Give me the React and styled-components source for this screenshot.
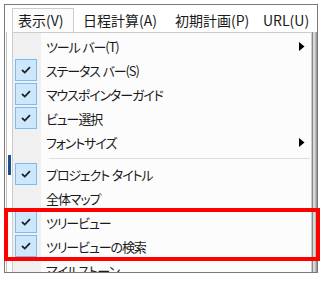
import React from "react";
import styled, { createGlobalStyle } from "styled-components";

const GlobalStyle = createGlobalStyle`
  html, body { margin: 0; padding: 0; background: #ffffff; }
  body { font-family: "Noto Sans CJK JP", "Noto Sans", sans-serif; }
  * { box-sizing: border-box; }
`;

const Page = styled.div`
  position: relative;
  width: 326px;
  height: 281px;
  padding: 4px 0 0 4px;
  overflow: hidden;
`;

const Frame = styled.div`
  width: 314px;
  height: 269px;
  border: 1px solid #7a7a7a;
  display: flex;
  flex-direction: column;
  overflow: hidden;
  background: #ffffff;
`;

const MenuBar = styled.div`
  height: 27px;
  display: flex;
  align-items: flex-end;
  padding-left: 7px;
`;

const TopItem = styled.div`
  width: ${(p) => p.$w}px;
  height: 24px;
  flex: none;
  display: flex;
  align-items: center;
  padding: 0 0 2px ${(p) => p.$indent}px;
  font-size: 14px;
  line-height: 1;
  color: #1a1a1a;
  white-space: nowrap;
  border: 1px solid ${(p) => (p.$open ? "#cccccc" : "transparent")};
  border-bottom: none;
  background: ${(p) => (p.$open ? "#fcfcfc" : "transparent")};
`;

const Body = styled.div`
  flex: 1;
  display: flex;
  min-height: 0;
`;

const LeftStrip = styled.div`
  width: 6px;
  margin-left: 1px;
  flex: none;
  border-left: 1px solid #c4c4c4;
  background: linear-gradient(
    to bottom,
    #ffffff 0 123px,
    #1c4f91 123px 143px,
    #ffffff 143px
  );
  background-size: 3px 100%;
  background-repeat: no-repeat;
  background-position: 1px 0;
`;

const Dropdown = styled.div`
  width: 300px;
  flex: none;
  border: 1px solid #cccccc;
  border-bottom: none;
  padding: 1px 0 0 0;
  background: linear-gradient(to right, #f0f0f0 0 28px, #fcfcfc 28px);
  display: flex;
  flex-direction: column;
`;

const RightStrip = styled.div`
  flex: 1;
  background: linear-gradient(
    to right,
    #8a8a8a 0 1px,
    #d8d8d8 1px 3px,
    #bdbdbd 3px 4px,
    #9a9a9a 4px
  );
`;

const Item = styled.div`
  height: 24px;
  flex: none;
  display: flex;
  align-items: center;
  padding: 0 6px 0 2px;
`;

const CheckCell = styled.div`
  width: 22px;
  height: 22px;
  flex: none;
  display: flex;
  align-items: center;
  justify-content: center;
  border: 1px solid ${(p) => (p.$checked ? "#7fbaef" : "transparent")};
  background: ${(p) => (p.$checked ? "#cde8fc" : "transparent")};
`;

const Label = styled.span`
  flex: 1;
  margin-left: 9px;
  font-size: 13px;
  line-height: 1;
  letter-spacing: -1.1px;
  word-spacing: 1px;
  color: #1a1a1a;
  white-space: pre;
  font-feature-settings: "palt";
`;

const Separator = styled.div`
  height: 8px;
  flex: none;
  display: flex;
  align-items: center;
  padding: 0 1px 0 36px;
  &::after {
    content: "";
    display: block;
    flex: 1;
    height: 1px;
    background: #dedede;
  }
`;

const Highlight = styled.div`
  position: absolute;
  left: 4px;
  top: 208px;
  width: 316px;
  height: 53px;
  border: 4px solid #ff0000;
  pointer-events: none;
`;

const Check = () => (
  <svg width="12" height="10" viewBox="0 0 12 10">
    <path d="M2 5 L4.8 7.6 L10 2.2" fill="none" stroke="#222" strokeWidth="1.8" />
  </svg>
);

const Arrow = () => (
  <svg width="6" height="9" viewBox="0 0 6 9">
    <polygon points="0,0 5.5,4.5 0,9" fill="#000" />
  </svg>
);

const items = [
  { label: "ツール バー(T)", sub: true },
  { label: "ステータス バー(S)", checked: true },
  { label: "マウスポインターガイド", checked: true },
  { label: "ビュー選択", checked: true },
  { label: "フォントサイズ", sub: true },
  { sep: true },
  { label: "プロジェクト タイトル", checked: true },
  { label: "全体マップ" },
  { label: "ツリービュー", checked: true },
  { label: "ツリービューの検索", checked: true },
  { label: "マイルストーン" },
];

const menus = [
  { label: "表示(V)", w: 62, indent: 5, open: true },
  { label: "日程計算(A)", w: 96, indent: 8 },
  { label: "初期計画(P)", w: 88, indent: 4 },
  { label: "URL(U)", w: 55, indent: 4 },
];

export default function App() {
  return (
    <>
      <GlobalStyle />
      <Page>
        <Frame>
          <MenuBar>
            {menus.map((m) => (
              <TopItem key={m.label} $w={m.w} $indent={m.indent} $open={m.open}>
                {m.label}
              </TopItem>
            ))}
          </MenuBar>
          <Body>
            <LeftStrip />
            <Dropdown>
              {items.map((it, i) =>
                it.sep ? (
                  <Separator key={i} />
                ) : (
                  <Item key={i}>
                    <CheckCell $checked={it.checked}>{it.checked && <Check />}</CheckCell>
                    <Label>{it.label}</Label>
                    {it.sub && <Arrow />}
                  </Item>
                )
              )}
            </Dropdown>
            <RightStrip />
          </Body>
        </Frame>
        <Highlight />
      </Page>
    </>
  );
}
